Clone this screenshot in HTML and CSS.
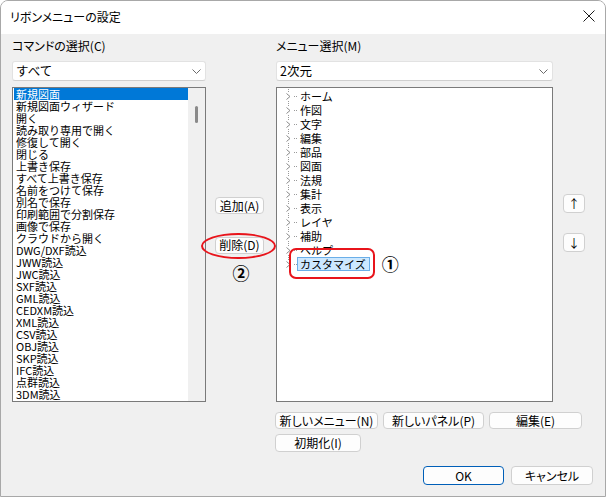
FILE: index.html
```html
<!DOCTYPE html>
<html lang="ja">
<head>
  <meta charset="UTF-8">
  <title>リボンメニューの設定</title>
  <link rel="stylesheet" href="styles.css">
</head>
<body>
  <div class="window">
    <div class="titlebar">
      <span class="title">リボンメニューの設定</span>
      <svg class="close" width="12" height="12" viewBox="0 0 12 12"><path d="M0.5 0.5L11.5 11.5M11.5 0.5L0.5 11.5" stroke="#1a1a1a" stroke-width="1" fill="none"/></svg>
    </div>

    <div class="content">
      <div class="columns">
        <div class="col col-left">
          <div class="label">コマンドの選択(C)</div>
          <div class="select">
            <span>すべて</span>
            <svg width="9" height="5" viewBox="0 0 9 5"><path d="M0.5 0.5L4.5 4.5L8.5 0.5" stroke="#6b6b6b" fill="none"/></svg>
          </div>
          <div class="listbox">
            <ul class="list">
              <li class="selected">新規図面</li>
              <li>新規図面ウィザード</li>
              <li>開く</li>
              <li>読み取り専用で開く</li>
              <li>修復して開く</li>
              <li>閉じる</li>
              <li>上書き保存</li>
              <li>すべて上書き保存</li>
              <li>名前をつけて保存</li>
              <li>別名で保存</li>
              <li>印刷範囲で分割保存</li>
              <li>画像で保存</li>
              <li>クラウドから開く</li>
              <li>DWG/DXF読込</li>
              <li>JWW読込</li>
              <li>JWC読込</li>
              <li>SXF読込</li>
              <li>GML読込</li>
              <li>CEDXM読込</li>
              <li>XML読込</li>
              <li>CSV読込</li>
              <li>OBJ読込</li>
              <li>SKP読込</li>
              <li>IFC読込</li>
              <li>点群読込</li>
              <li>3DM読込</li>
            </ul>
            <div class="scrollbar"><div class="thumb"></div></div>
          </div>
        </div>

        <div class="col col-mid">
          <button class="btn btn-mid">追加(A)</button>
          <div class="mark-wrap">
            <button class="btn btn-mid">削除(D)</button>
            <span class="ellipse"></span>
          </div>
          <div class="num num-2">②</div>
        </div>

        <div class="col col-right">
          <div class="label">メニュー選択(M)</div>
          <div class="select">
            <span>2次元</span>
            <svg width="9" height="5" viewBox="0 0 9 5"><path d="M0.5 0.5L4.5 4.5L8.5 0.5" stroke="#6b6b6b" fill="none"/></svg>
          </div>
          <div class="listbox">
            <ul class="tree">
              <li><span class="chev"><svg width="5" height="7" viewBox="0 0 5 7"><path d="M0.5 0.5L4 3.5L0.5 6.5" stroke="#8a8a8a" fill="none"/></svg></span><span class="dots"></span><span class="node">ホーム</span></li>
              <li><span class="chev"><svg width="5" height="7" viewBox="0 0 5 7"><path d="M0.5 0.5L4 3.5L0.5 6.5" stroke="#8a8a8a" fill="none"/></svg></span><span class="dots"></span><span class="node">作図</span></li>
              <li><span class="chev"><svg width="5" height="7" viewBox="0 0 5 7"><path d="M0.5 0.5L4 3.5L0.5 6.5" stroke="#8a8a8a" fill="none"/></svg></span><span class="dots"></span><span class="node">文字</span></li>
              <li><span class="chev"><svg width="5" height="7" viewBox="0 0 5 7"><path d="M0.5 0.5L4 3.5L0.5 6.5" stroke="#8a8a8a" fill="none"/></svg></span><span class="dots"></span><span class="node">編集</span></li>
              <li><span class="chev"><svg width="5" height="7" viewBox="0 0 5 7"><path d="M0.5 0.5L4 3.5L0.5 6.5" stroke="#8a8a8a" fill="none"/></svg></span><span class="dots"></span><span class="node">部品</span></li>
              <li><span class="chev"><svg width="5" height="7" viewBox="0 0 5 7"><path d="M0.5 0.5L4 3.5L0.5 6.5" stroke="#8a8a8a" fill="none"/></svg></span><span class="dots"></span><span class="node">図面</span></li>
              <li><span class="chev"><svg width="5" height="7" viewBox="0 0 5 7"><path d="M0.5 0.5L4 3.5L0.5 6.5" stroke="#8a8a8a" fill="none"/></svg></span><span class="dots"></span><span class="node">法規</span></li>
              <li><span class="chev"><svg width="5" height="7" viewBox="0 0 5 7"><path d="M0.5 0.5L4 3.5L0.5 6.5" stroke="#8a8a8a" fill="none"/></svg></span><span class="dots"></span><span class="node">集計</span></li>
              <li><span class="chev"><svg width="5" height="7" viewBox="0 0 5 7"><path d="M0.5 0.5L4 3.5L0.5 6.5" stroke="#8a8a8a" fill="none"/></svg></span><span class="dots"></span><span class="node">表示</span></li>
              <li><span class="chev"><svg width="5" height="7" viewBox="0 0 5 7"><path d="M0.5 0.5L4 3.5L0.5 6.5" stroke="#8a8a8a" fill="none"/></svg></span><span class="dots"></span><span class="node">レイヤ</span></li>
              <li><span class="chev"><svg width="5" height="7" viewBox="0 0 5 7"><path d="M0.5 0.5L4 3.5L0.5 6.5" stroke="#8a8a8a" fill="none"/></svg></span><span class="dots"></span><span class="node">補助</span></li>
              <li><span class="chev"><svg width="5" height="7" viewBox="0 0 5 7"><path d="M0.5 0.5L4 3.5L0.5 6.5" stroke="#8a8a8a" fill="none"/></svg></span><span class="dots"></span><span class="node">ヘルプ</span></li>
              <li><span class="chev"><svg width="5" height="7" viewBox="0 0 5 7"><path d="M0.5 0.5L4 3.5L0.5 6.5" stroke="#8a8a8a" fill="none"/></svg></span><span class="dots"></span><span class="node node-selected">カスタマイズ<span class="redbox"></span></span><span class="num num-1">①</span></li>
            </ul>
          </div>
        </div>

        <div class="col col-side">
          <button class="btn btn-arrow">↑</button>
          <button class="btn btn-arrow btn-down">↓</button>
        </div>
      </div>

      <div class="footer">
        <div class="row">
          <button class="btn btn-new-menu">新しいメニュー(N)</button>
          <button class="btn btn-new-panel">新しいパネル(P)</button>
          <button class="btn btn-edit">編集(E)</button>
        </div>
        <div class="row row-2">
          <button class="btn btn-init">初期化(I)</button>
        </div>
      </div>

      <div class="actions">
        <button class="btn btn-ok">OK</button>
        <button class="btn btn-cancel">キャンセル</button>
      </div>
    </div>
  </div>
</body>
</html>
```

FILE: styles.css
```css
body { margin: 0; font-family: "Noto Sans CJK JP", "Noto Sans", sans-serif; font-size: 12px; color: #000; }
.window { width: 606px; height: 497px; box-sizing: border-box; border: 1px solid #a8a8a8; border-radius: 8px 8px 0 0; overflow: hidden; background: #f0f0f0; display: flex; flex-direction: column; }

.titlebar { height: 33px; box-sizing: border-box; background: #fff; display: flex; align-items: center; justify-content: space-between; padding: 0 10px 3px 9px; }
.title { font-size: 12px; font-feature-settings: "palt"; }

.content { flex: 1; padding: 4px 0 0 11px; }
.columns { display: flex; }
.col { display: flex; flex-direction: column; }
.col-left { width: 194px; }
.col-mid { width: 70px; padding-top: 159px; box-sizing: border-box; }
.col-right { width: 277px; }
.col-side { padding: 156px 0 0 10px; }

.label { height: 16px; line-height: 16px; font-feature-settings: "palt"; }
.select { margin-top: 7px; height: 20px; box-sizing: border-box; background: #fff; border: 1px solid #e2e2e2; border-bottom-color: #cfcfcf; border-radius: 3px; display: flex; align-items: center; justify-content: space-between; padding: 0 4px 0 3px; }
.select span { line-height: 16px; font-size: 12.5px; }

.listbox { margin-top: 6px; height: 315px; box-sizing: border-box; border: 1px solid #7a7a7a; background: #fff; display: flex; align-items: flex-start; overflow: hidden; }
.list { flex: 1; margin: 0; padding: 0 0 0 1px; list-style: none; font-size: 11px; line-height: 12px; overflow: hidden; }
.list li { padding-left: 2px; height: 12px; white-space: nowrap; }
.list li.selected { background: #0078d7; color: #fff; }
.scrollbar { width: 17px; height: 313px; background: #f0f0f0; padding-top: 18px; box-sizing: border-box; }
.thumb { width: 3px; height: 17px; margin-left: 7px; background: #8a8a8a; border-radius: 2px; }

.tree { margin: 1px 0 0; padding: 0; list-style: none; font-size: 11px; background: repeating-linear-gradient(to bottom, #9a9a9a 0 1px, transparent 1px 2px) 11px 0 / 1px calc(100% - 7px) no-repeat; }
.tree li { display: flex; align-items: center; height: 14px; }
.chev { width: 8px; height: 9px; margin-left: 7px; display: flex; align-items: center; justify-content: center; background: #fff; }
.dots { width: 3px; height: 0; margin-left: 2px; border-top: 1px dotted #9a9a9a; }
.node { border: 1px solid transparent; padding: 0 3px 0 2px; line-height: 12px; }
.node-selected { position: relative; background: #cce8ff; border-color: #6aaee8; }
.redbox { position: absolute; left: -9px; right: -6px; top: -10px; bottom: -9px; border: 2.5px solid #e8141b; border-radius: 7px; }
.num { font-size: 17px; line-height: 14px; font-weight: bold; }
.num-1 { margin-left: 12px; }
.num-2 { width: 49px; margin: 10px 0 0 9px; padding-left: 3px; box-sizing: border-box; text-align: center; line-height: 18px; }

.btn { font-family: inherit; font-size: 12px; font-feature-settings: "palt"; color: #000; background: #fdfdfd; border: 1px solid #d0d0d0; border-radius: 4px; padding: 0; line-height: 14px; box-sizing: border-box; }
.btn-mid { width: 49px; height: 17px; margin-left: 9px; }
.mark-wrap { position: relative; margin-top: 22px; }
.ellipse { position: absolute; left: -5px; top: -3px; width: 75px; height: 26px; box-sizing: border-box; border: 2.5px solid #e8141b; border-radius: 50%; }
.btn-arrow { width: 22px; height: 19px; font-size: 12px; }
.btn-down { margin-top: 20px; }

.footer { margin-top: 10px; padding-left: 263px; }
.row { display: flex; gap: 5px; }
.row-2 { margin-top: 5px; }
.btn-new-menu { width: 103px; height: 17px; }
.btn-new-panel { width: 101px; height: 17px; }
.btn-edit { width: 93px; height: 17px; }
.btn-init { width: 86px; height: 18px; }

.actions { display: flex; justify-content: flex-end; gap: 7px; margin: 14px 12px 0 0; }
.btn-ok { width: 81px; height: 19px; border-color: #005fb8; }
.btn-cancel { width: 82px; height: 19px; }
```
